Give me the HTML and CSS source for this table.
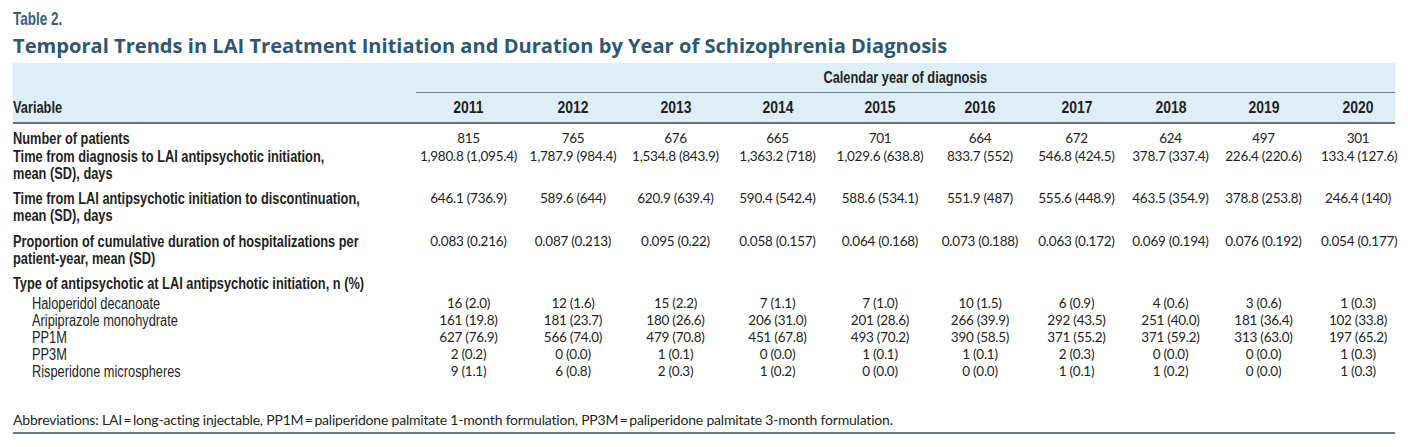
FILE: index.html
```html
<!DOCTYPE html>
<html lang="en">
<head>
<meta charset="utf-8">
<title>Table 2</title>
<link rel="stylesheet" href="styles.css">
</head>
<body>
<div class="page">
  <div class="tlabel"><span class="nar tight">Table 2.</span></div>
  <h1 class="title">Temporal Trends in LAI Treatment Initiation and Duration by Year of Schizophrenia Diagnosis</h1>
  <table class="tbl">
    <colgroup>
      <col class="c-var">
      <col class="c-y1"><col class="c-y2"><col class="c-y3"><col class="c-y4"><col class="c-y5">
      <col class="c-y6"><col class="c-y7"><col class="c-y8"><col class="c-y9"><col class="c-y10">
    </colgroup>
    <thead>
      <tr class="h1">
        <th class="hvar" rowspan="2"><span class="nar">Variable</span></th>
        <th class="hcal" colspan="10"><span class="nar mid">Calendar year of diagnosis</span></th>
      </tr>
      <tr class="h2">
        <th><span class="nar mid yr">2011</span></th><th><span class="nar mid yr">2012</span></th><th><span class="nar mid yr">2013</span></th><th><span class="nar mid yr">2014</span></th><th><span class="nar mid yr">2015</span></th>
        <th><span class="nar mid yr">2016</span></th><th><span class="nar mid yr">2017</span></th><th><span class="nar mid yr">2018</span></th><th><span class="nar mid yr">2019</span></th><th class="last"><span class="nar mid yr">2020</span></th>
      </tr>
    </thead>
    <tbody>
      <tr class="first">
        <th class="lab"><span class="nar">Number of patients</span></th>
        <td>815</td><td>765</td><td>676</td><td>665</td><td>701</td><td>664</td><td>672</td><td>624</td><td>497</td><td class="last">301</td>
      </tr>
      <tr class="sp">
        <th class="lab"><span class="nar">Time from diagnosis to LAI antipsychotic initiation,<br>mean (SD), days</span></th>
        <td>1,980.8 (1,095.4)</td><td>1,787.9 (984.4)</td><td>1,534.8 (843.9)</td><td>1,363.2 (718)</td><td>1,029.6 (638.8)</td><td>833.7 (552)</td><td>546.8 (424.5)</td><td>378.7 (337.4)</td><td>226.4 (220.6)</td><td class="last">133.4 (127.6)</td>
      </tr>
      <tr class="sp">
        <th class="lab"><span class="nar">Time from LAI antipsychotic initiation to discontinuation,<br>mean (SD), days</span></th>
        <td>646.1 (736.9)</td><td>589.6 (644)</td><td>620.9 (639.4)</td><td>590.4 (542.4)</td><td>588.6 (534.1)</td><td>551.9 (487)</td><td>555.6 (448.9)</td><td>463.5 (354.9)</td><td>378.8 (253.8)</td><td class="last">246.4 (140)</td>
      </tr>
      <tr class="sp">
        <th class="lab"><span class="nar">Proportion of cumulative duration of hospitalizations per<br>patient-year, mean (SD)</span></th>
        <td>0.083 (0.216)</td><td>0.087 (0.213)</td><td>0.095 (0.22)</td><td>0.058 (0.157)</td><td>0.064 (0.168)</td><td>0.073 (0.188)</td><td>0.063 (0.172)</td><td>0.069 (0.194)</td><td>0.076 (0.192)</td><td class="last">0.054 (0.177)</td>
      </tr>
      <tr class="type">
        <th class="lab"><span class="nar">Type of antipsychotic at LAI antipsychotic initiation, n (%)</span></th>
        <td></td><td></td><td></td><td></td><td></td><td></td><td></td><td></td><td></td><td class="last"></td>
      </tr>
      <tr>
        <th class="lab sub"><span class="nar">Haloperidol decanoate</span></th>
        <td>16 (2.0)</td><td>12 (1.6)</td><td>15 (2.2)</td><td>7 (1.1)</td><td>7 (1.0)</td><td>10 (1.5)</td><td>6 (0.9)</td><td>4 (0.6)</td><td>3 (0.6)</td><td class="last">1 (0.3)</td>
      </tr>
      <tr>
        <th class="lab sub"><span class="nar">Aripiprazole monohydrate</span></th>
        <td>161 (19.8)</td><td>181 (23.7)</td><td>180 (26.6)</td><td>206 (31.0)</td><td>201 (28.6)</td><td>266 (39.9)</td><td>292 (43.5)</td><td>251 (40.0)</td><td>181 (36.4)</td><td class="last">102 (33.8)</td>
      </tr>
      <tr>
        <th class="lab sub"><span class="nar">PP1M</span></th>
        <td>627 (76.9)</td><td>566 (74.0)</td><td>479 (70.8)</td><td>451 (67.8)</td><td>493 (70.2)</td><td>390 (58.5)</td><td>371 (55.2)</td><td>371 (59.2)</td><td>313 (63.0)</td><td class="last">197 (65.2)</td>
      </tr>
      <tr>
        <th class="lab sub"><span class="nar">PP3M</span></th>
        <td>2 (0.2)</td><td>0 (0.0)</td><td>1 (0.1)</td><td>0 (0.0)</td><td>1 (0.1)</td><td>1 (0.1)</td><td>2 (0.3)</td><td>0 (0.0)</td><td>0 (0.0)</td><td class="last">1 (0.3)</td>
      </tr>
      <tr>
        <th class="lab sub"><span class="nar">Risperidone microspheres</span></th>
        <td>9 (1.1)</td><td>6 (0.8)</td><td>2 (0.3)</td><td>1 (0.2)</td><td>0 (0.0)</td><td>0 (0.0)</td><td>1 (0.1)</td><td>1 (0.2)</td><td>0 (0.0)</td><td class="last">1 (0.3)</td>
      </tr>
    </tbody>
  </table>
  <p class="foot">Abbreviations: LAI&#8201;=&#8201;long-acting injectable, PP1M&#8201;=&#8201;paliperidone palmitate 1-month formulation, PP3M&#8201;=&#8201;paliperidone palmitate 3-month formulation.</p>
</div>
</body>
</html>
```

FILE: styles.css
```css
html, body {
  margin: 0;
  padding: 0;
  background: #ffffff;
}

.page {
  padding: 8px 13px 0 13px;
  width: 1382px;
  color: #231f20;
}

/* Emulates a condensed face (Arial Narrow = Arial at ~82% width) */
.nar {
  display: inline-block;
  font-family: "Liberation Sans", Arimo, sans-serif;
  transform: scaleX(0.8);
  transform-origin: left center;
  white-space: nowrap;
}

.nar.mid {
  transform-origin: center center;
}

.nar.tight {
  transform: scaleX(0.73);
}

.nar.yr {
  font-size: 17px;
  transform: scaleX(0.82);
}

.tlabel {
  display: flex;
  font-weight: 700;
  font-size: 18.5px;
  line-height: 22px;
  color: #3a6079;
}

.title {
  margin: 2px 0 3px 0;
  font-family: "Open Sans", Lato, sans-serif;
  font-weight: 700;
  font-size: 20.1px;
  line-height: 28px;
  color: #2e5774;
}

.tbl {
  width: 1382px;
  table-layout: fixed;
  border-collapse: collapse;
  border-spacing: 0;
}

.c-var { width: 403px; }
.c-y1 { width: 105px; }
.c-y2 { width: 104px; }
.c-y3 { width: 101px; }
.c-y4 { width: 103px; }
.c-y5 { width: 102px; }
.c-y6 { width: 98px; }
.c-y7 { width: 95px; }
.c-y8 { width: 93px; }
.c-y9 { width: 93px; }
.c-y10 { width: 85px; }

.tbl thead th {
  background: #deeef8;
  font-weight: 700;
  font-size: 16px;
  line-height: 18px;
  color: #231f20;
  padding: 0;
}

.tbl .h1 th.hcal {
  height: 29px;
  text-align: center;
  vertical-align: middle;
  border-bottom: 1.5px solid #6f7e88;
}

.tbl .h2 th {
  height: 29px;
  text-align: center;
  vertical-align: middle;
  border-bottom: 2px solid #717171;
}

.tbl .h2 th.last, .tbl td.last {
  padding-left: 11px;
}

.tbl th.hvar {
  text-align: left;
  vertical-align: bottom;
  padding-bottom: 5px;
  border-bottom: 2px solid #717171;
}

.tbl tbody th,
.tbl tbody td {
  vertical-align: top;
  line-height: 17px;
  padding: 0;
  white-space: nowrap;
}

.tbl tbody th.lab {
  text-align: left;
  font-weight: 700;
  font-size: 16px;
  color: #231f20;
}

.tbl tbody th.sub {
  font-weight: 400;
  padding-left: 19px;
}

.tbl tbody td {
  text-align: center;
  font-family: Lato, "Liberation Sans", sans-serif;
  font-size: 13.5px;
  letter-spacing: -0.25px;
}

.tbl tbody tr.first th,
.tbl tbody tr.first td {
  padding-top: 5.5px;
  padding-bottom: 1px;
}

.tbl tbody tr.sp th,
.tbl tbody tr.sp td {
  padding-bottom: 8.5px;
}

.tbl tbody tr.type th,
.tbl tbody tr.type td {
  padding-bottom: 3px;
}

.foot {
  margin: 32px 0 0 0;
  padding-bottom: 4px;
  font-family: Lato, "Liberation Sans", sans-serif;
  font-size: 14px;
  letter-spacing: -0.2px;
  line-height: 16px;
  border-bottom: 2px solid #5d7a8e;
}
```
